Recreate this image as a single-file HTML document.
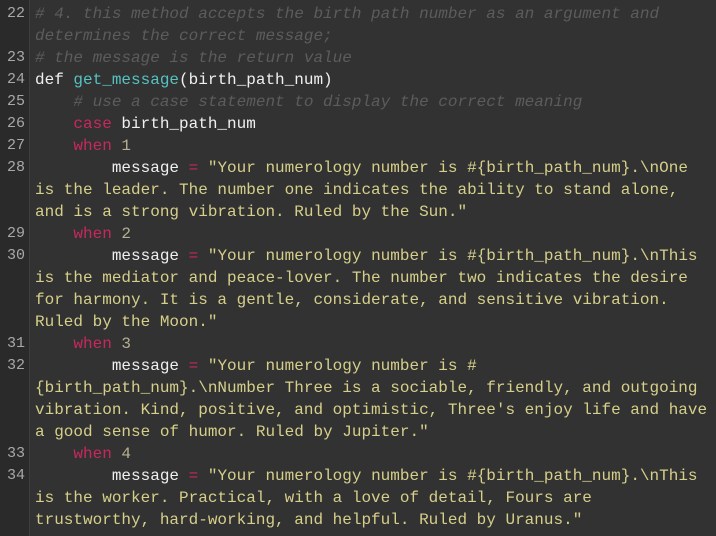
<!DOCTYPE html>
<html><head><meta charset="utf-8"><style>
html,body{margin:0;padding:0;background:#323232;width:716px;height:536px;overflow:hidden}
body{font-family:"Liberation Mono","Courier New",monospace;font-size:16px;}
.g{position:absolute;left:0;top:0;width:29px;height:536px;background:#2a2a2a;border-right:1px solid #3e3e3e}
.r{position:absolute;left:0;height:22px;line-height:22px;white-space:pre;width:716px}
.n{position:absolute;left:0;width:25px;text-align:right;color:#a8a8a8;font-size:15px}
.t{position:absolute;left:35px;color:#f0f0f0;letter-spacing:0}
.c{color:#5c5c5c;font-style:italic}
.s{color:#d6cf8a}
.k{color:#c8285e}
.f{color:#56c2c2}
.d{color:#b5b090}
</style></head><body>
<div class="g"></div>
<div class="r" style="top:3px"><span class="n">22</span><span class="t c"># 4. this method accepts the birth path number as an argument and</span></div>
<div class="r" style="top:25px"><span class="t c">determines the correct message;</span></div>
<div class="r" style="top:47px"><span class="n">23</span><span class="t c"># the message is the return value</span></div>
<div class="r" style="top:69px"><span class="n">24</span><span class="t">def <span class="f">get_message</span>(birth_path_num)</span></div>
<div class="r" style="top:91px"><span class="n">25</span><span class="t">    <span class="c"># use a case statement to display the correct meaning</span></span></div>
<div class="r" style="top:113px"><span class="n">26</span><span class="t">    <span class="k">case</span> birth_path_num</span></div>
<div class="r" style="top:135px"><span class="n">27</span><span class="t">    <span class="k">when</span> <span class="d">1</span></span></div>
<div class="r" style="top:157px"><span class="n">28</span><span class="t">        message <span class="k">=</span> <span class="s">"Your numerology number is #{birth_path_num}.\nOne</span></span></div>
<div class="r" style="top:179px"><span class="t s">is the leader. The number one indicates the ability to stand alone,</span></div>
<div class="r" style="top:201px"><span class="t s">and is a strong vibration. Ruled by the Sun."</span></div>
<div class="r" style="top:223px"><span class="n">29</span><span class="t">    <span class="k">when</span> <span class="d">2</span></span></div>
<div class="r" style="top:245px"><span class="n">30</span><span class="t">        message <span class="k">=</span> <span class="s">"Your numerology number is #{birth_path_num}.\nThis</span></span></div>
<div class="r" style="top:267px"><span class="t s">is the mediator and peace-lover. The number two indicates the desire</span></div>
<div class="r" style="top:289px"><span class="t s">for harmony. It is a gentle, considerate, and sensitive vibration.</span></div>
<div class="r" style="top:311px"><span class="t s">Ruled by the Moon."</span></div>
<div class="r" style="top:333px"><span class="n">31</span><span class="t">    <span class="k">when</span> <span class="d">3</span></span></div>
<div class="r" style="top:355px"><span class="n">32</span><span class="t">        message <span class="k">=</span> <span class="s">"Your numerology number is #</span></span></div>
<div class="r" style="top:377px"><span class="t s">{birth_path_num}.\nNumber Three is a sociable, friendly, and outgoing</span></div>
<div class="r" style="top:399px"><span class="t s">vibration. Kind, positive, and optimistic, Three's enjoy life and have</span></div>
<div class="r" style="top:421px"><span class="t s">a good sense of humor. Ruled by Jupiter."</span></div>
<div class="r" style="top:443px"><span class="n">33</span><span class="t">    <span class="k">when</span> <span class="d">4</span></span></div>
<div class="r" style="top:465px"><span class="n">34</span><span class="t">        message <span class="k">=</span> <span class="s">"Your numerology number is #{birth_path_num}.\nThis</span></span></div>
<div class="r" style="top:487px"><span class="t s">is the worker. Practical, with a love of detail, Fours are</span></div>
<div class="r" style="top:509px"><span class="t s">trustworthy, hard-working, and helpful. Ruled by Uranus."</span></div>
</body></html>
